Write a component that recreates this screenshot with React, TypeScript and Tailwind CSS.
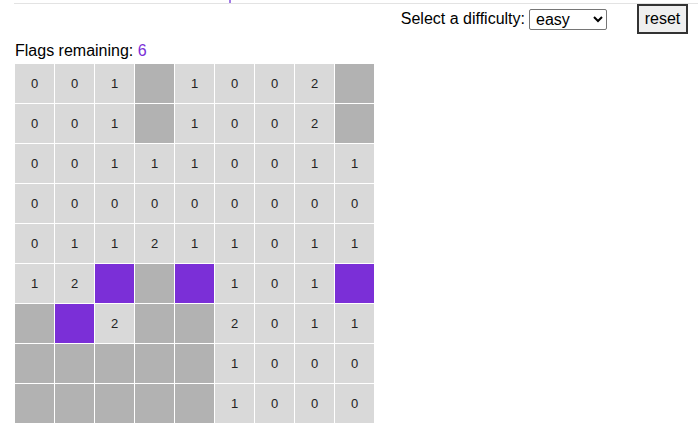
import React from "react";

type Cell = number | "U" | "F";

const board: Cell[][] = [
  [0, 0, 1, "U", 1, 0, 0, 2, "U"],
  [0, 0, 1, "U", 1, 0, 0, 2, "U"],
  [0, 0, 1, 1, 1, 0, 0, 1, 1],
  [0, 0, 0, 0, 0, 0, 0, 0, 0],
  [0, 1, 1, 2, 1, 1, 0, 1, 1],
  [1, 2, "F", "U", "F", 1, 0, 1, "F"],
  ["U", "F", 2, "U", "U", 2, 0, 1, 1],
  ["U", "U", "U", "U", "U", 1, 0, 0, 0],
  ["U", "U", "U", "U", "U", 1, 0, 0, 0],
];

const cellClass = (c: Cell) => {
  if (c === "U") return "bg-[#b2b2b2]";
  if (c === "F") return "bg-[#7b2fd7]";
  return "bg-[#d9d9d9]";
};

const App = () => {
  return (
    <div className="w-[698px] h-[432px] bg-white text-black font-['Liberation_Sans',Arial,sans-serif] overflow-hidden">
      <div className="flex h-[4px] ml-[14px] border-b border-[#e3e3e3]">
        <div className="w-[215px]" />
        <div className="w-[2px] h-[3px] bg-[#a27be6]" />
      </div>

      <div className="flex items-center justify-end h-[30px] pr-[10px]">
        <label className="text-[16px] leading-[18px] mr-[4px]">Select a difficulty:</label>
        <select
          defaultValue="easy"
          className="w-[78px] h-[21px] text-[16px] leading-[18px] border border-[#767676] rounded-[2px] pl-[2px] bg-white"
        >
          <option value="easy">easy</option>
          <option value="medium">medium</option>
          <option value="hard">hard</option>
        </select>
        <button className="ml-[30px] w-[51px] h-[30px] text-[16px] bg-[#efefef] border-2 border-[#333]">
          reset
        </button>
      </div>

      <div className="mt-[8px] ml-[15px] text-[16px] leading-[18px]">
        Flags remaining: <span className="text-[#7b2fd7]">6</span>
      </div>

      <div className="mt-[4px] ml-[15px] grid grid-cols-[repeat(9,39px)] auto-rows-[39px] gap-px w-fit">
        {board.flat().map((c, i) => (
          <div
            key={i}
            className={`flex items-center justify-center text-[13px] text-[#222] ${cellClass(c)}`}
          >
            {typeof c === "number" ? c : ""}
          </div>
        ))}
      </div>
    </div>
  );
};

export default App;
